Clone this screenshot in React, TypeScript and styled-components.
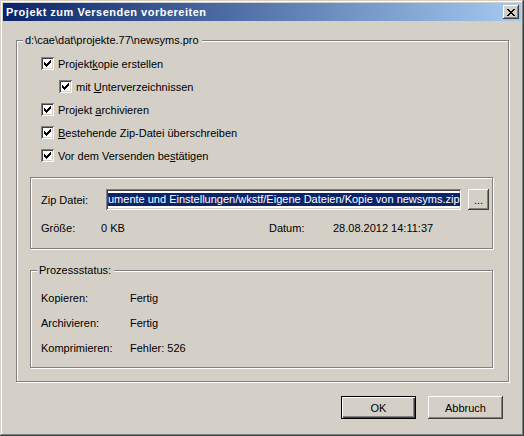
import React from "react";
import styled, { createGlobalStyle } from "styled-components";

const GlobalStyle = createGlobalStyle`
  html, body {
    margin: 0;
    padding: 0;
    background: #d4d0c8;
  }
  body {
    font-family: "Liberation Sans", Arial, sans-serif;
    font-size: 11px;
    color: #000;
  }
`;

const Window = styled.div`
  box-sizing: border-box;
  width: 524px;
  height: 436px;
  padding: 3px;
  display: flex;
  flex-direction: column;
  background: #d4d0c8;
  box-shadow: inset -1px -1px #404040, inset 1px 1px #d4d0c8,
    inset -2px -2px #808080, inset 2px 2px #fff;
`;

const TitleBar = styled.div`
  height: 18px;
  display: flex;
  align-items: center;
  padding: 0 2px 0 3px;
  background: linear-gradient(to right, #0a246a, #a6caf0);
  color: #fff;
  font-weight: bold;
  font-size: 11px;
`;

const TitleText = styled.span`
  flex: 1;
  white-space: nowrap;
  letter-spacing: 0.5px;
`;

const CloseButton = styled.div`
  width: 16px;
  height: 14px;
  display: flex;
  align-items: center;
  justify-content: center;
  background: #d4d0c8;
  box-shadow: inset -1px -1px #404040, inset 1px 1px #fff,
    inset -2px -2px #808080;
`;

const Body = styled.div`
  flex: 1;
  display: flex;
  flex-direction: column;
  padding: 19px 12px 0 13px;
`;

const GroupBox = styled.div<{ $pad: string; $mt?: number }>`
  position: relative;
  border: 1px solid #808080;
  box-shadow: inset 1px 1px #fff, 1px 1px #fff;
  padding: ${(p) => p.$pad};
  margin-top: ${(p) => p.$mt ?? 0}px;
`;

const Legend = styled.span`
  position: absolute;
  top: -7px;
  left: 6px;
  padding: 0 3px 0 2px;
  line-height: 13px;
  background: #d4d0c8;
  white-space: nowrap;
`;

const CheckList = styled.div`
  display: flex;
  flex-direction: column;
`;

const CheckRow = styled.div<{ $indent?: number }>`
  height: 23px;
  display: flex;
  align-items: center;
  gap: 4px;
  padding-left: ${(p) => 11 + (p.$indent ?? 0)}px;
`;

const Box = styled.span`
  width: 13px;
  height: 13px;
  flex: none;
  display: flex;
  align-items: center;
  justify-content: center;
  background: #fff;
  box-shadow: inset 1px 1px #808080, inset -1px -1px #fff,
    inset 2px 2px #404040, inset -2px -2px #d4d0c8;
`;

const Row = styled.div<{ $h: number }>`
  height: ${(p) => p.$h}px;
  display: flex;
  align-items: center;
`;

const Label = styled.span<{ $w: number }>`
  width: ${(p) => p.$w}px;
  flex: none;
  white-space: nowrap;
`;

const Edit = styled.div`
  box-sizing: border-box;
  width: 355px;
  height: 21px;
  padding: 2px;
  display: flex;
  align-items: center;
  overflow: hidden;
  background: #fff;
  box-shadow: inset 1px 1px #808080, inset -1px -1px #fff,
    inset 2px 2px #404040, inset -2px -2px #d4d0c8;
`;

const Selected = styled.span`
  background: #0a246a;
  color: #fff;
  line-height: 13px;
  white-space: nowrap;
`;

const Button = styled.div<{ $w: number; $h: number; $default?: boolean }>`
  box-sizing: border-box;
  width: ${(p) => p.$w}px;
  height: ${(p) => p.$h}px;
  display: flex;
  align-items: center;
  justify-content: center;
  background: #d4d0c8;
  border: ${(p) => (p.$default ? "1px solid #000" : "none")};
  box-shadow: ${(p) =>
    p.$default
      ? "inset 1px 1px #fff, inset -1px -1px #404040, inset -2px -2px #808080"
      : "inset -1px -1px #404040, inset 1px 1px #fff, inset -2px -2px #808080"};
  white-space: nowrap;
`;

const Buttons = styled.div`
  display: flex;
  justify-content: flex-end;
  gap: 12px;
  margin-top: 14px;
  padding-right: 6px;
`;

const CheckMark = () => (
  <svg width="7" height="7" viewBox="0 0 7 7" shapeRendering="crispEdges">
    <path
      fill="#000"
      d="M6 0h1v1h-1z M5 1h2v1h-2z M0 2h1v1h-1z M4 2h3v1h-3z M0 3h2v1h-2z M3 3h3v1h-3z M0 4h5v1h-5z M1 5h3v1h-3z M2 6h1v1h-1z"
    />
  </svg>
);

const CloseGlyph = () => (
  <svg width="8" height="7" viewBox="0 0 8 7" shapeRendering="crispEdges">
    <path
      fill="#000"
      d="M0 0h2v1h-2z M6 0h2v1h-2z M1 1h2v1h-2z M5 1h2v1h-2z M2 2h4v1h-4z M3 3h2v1h-2z M2 4h4v1h-4z M1 5h2v1h-2z M5 5h2v1h-2z M0 6h2v1h-2z M6 6h2v1h-2z"
    />
  </svg>
);

const Check: React.FC<{ indent?: number; children: React.ReactNode }> = ({
  indent,
  children,
}) => (
  <CheckRow $indent={indent}>
    <Box>
      <CheckMark />
    </Box>
    <span>{children}</span>
  </CheckRow>
);

const status = [
  { label: "Kopieren:", value: "Fertig" },
  { label: "Archivieren:", value: "Fertig" },
  { label: "Komprimieren:", value: "Fehler: 526" },
];

export default function App() {
  return (
    <>
      <GlobalStyle />
      <Window>
        <TitleBar>
          <TitleText>Projekt zum Versenden vorbereiten</TitleText>
          <CloseButton>
            <CloseGlyph />
          </CloseButton>
        </TitleBar>
        <Body>
          <GroupBox $pad="11px 15px 13px 13px">
            <Legend>{"d:\\cae\\dat\\projekte.77\\newsyms.pro"}</Legend>
            <CheckList>
              <Check>
                Projekt<u>k</u>opie erstellen
              </Check>
              <Check indent={18}>
                mit <u>U</u>nterverzeichnissen
              </Check>
              <Check>
                Projekt <u>a</u>rchivieren
              </Check>
              <Check>
                <u>B</u>estehende Zip-Datei überschreiben
              </Check>
              <Check>
                Vor dem Versenden be<u>s</u>tätigen
              </Check>
            </CheckList>

            <GroupBox $pad="11px 0 9px 10px" $mt={10}>
              <Row $h={21}>
                <Label $w={65}>Zip Datei:</Label>
                <Edit>
                  <Selected>
                    umente und Einstellungen/wkstf/Eigene Dateien/Kopie von newsyms.zip
                  </Selected>
                </Edit>
                <Button $w={21} $h={21} style={{ marginLeft: 7 }}>
                  ...
                </Button>
              </Row>
              <Row $h={22} style={{ marginTop: 7 }}>
                <Label $w={60}>Größe:</Label>
                <Label $w={168}>0 KB</Label>
                <Label $w={64}>Datum:</Label>
                <span>28.08.2012 14:11:37</span>
              </Row>
            </GroupBox>

            <GroupBox $pad="14px 0 7px 10px" $mt={21}>
              <Legend>Prozessstatus:</Legend>
              {status.map((s) => (
                <Row $h={25} key={s.label}>
                  <Label $w={89}>{s.label}</Label>
                  <span>{s.value}</span>
                </Row>
              ))}
            </GroupBox>
          </GroupBox>

          <Buttons>
            <Button $w={75} $h={23} $default>
              OK
            </Button>
            <Button $w={75} $h={23}>
              Abbruch
            </Button>
          </Buttons>
        </Body>
      </Window>
    </>
  );
}
